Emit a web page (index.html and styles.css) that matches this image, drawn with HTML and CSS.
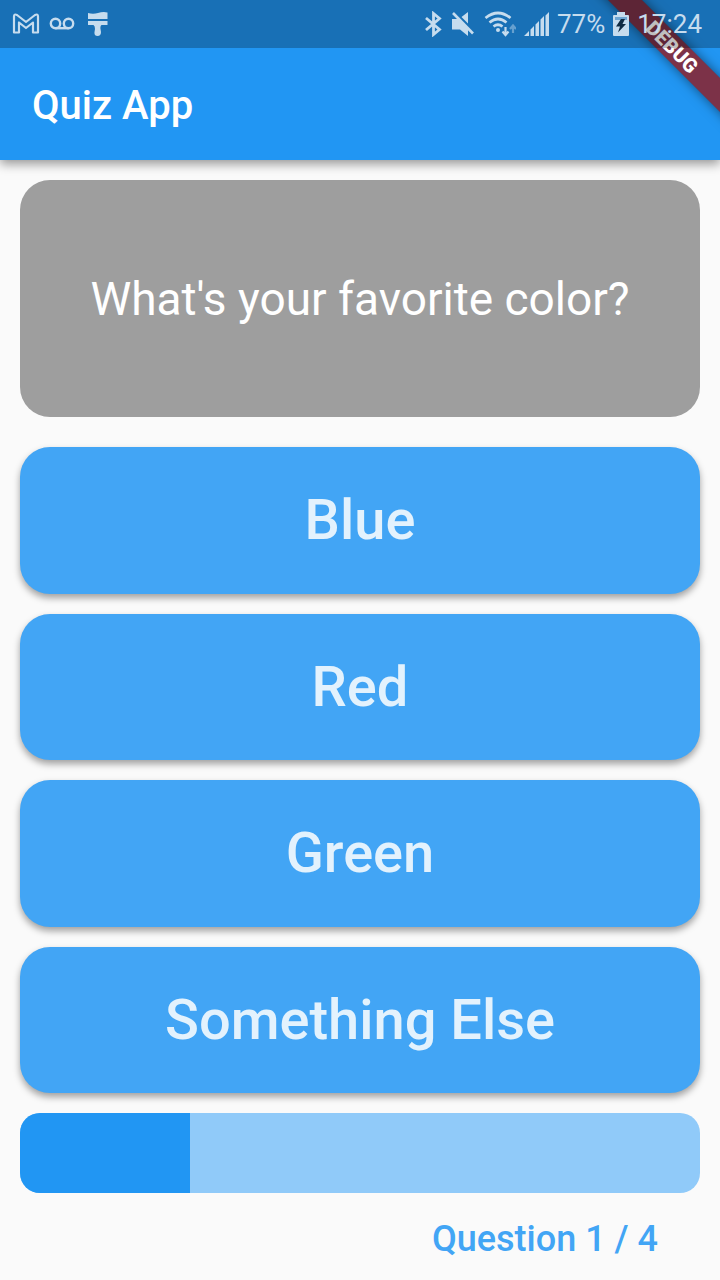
FILE: index.html
```html
<!DOCTYPE html>
<html lang="en">
<head>
<meta charset="utf-8">
<meta name="viewport" content="width=device-width, initial-scale=1">
<title>Quiz App</title>
<link rel="stylesheet" href="styles.css">
</head>
<body>
<div class="app">
  <header class="app-bar">
    <h1 class="app-title">Quiz App</h1>
  </header>
  <div class="corner"><span class="ribbon">DEBUG</span></div>
  <div class="status-bar">
    <div class="status-group">
      <svg class="icon" width="28" height="24" viewBox="0 0 28 24" fill="none" stroke="currentColor" stroke-width="2.200" stroke-linejoin="round"><path d="M2 20.500V4.500Q2 1.500 5 3L14 10L23 3Q26 1.500 26 4.500V20.500H21V10.500L14 16L7 10.500V20.500Z"/></svg>
      <svg class="icon" width="28" height="24" viewBox="0 0 28 24" fill="none" stroke="currentColor" stroke-width="2.400"><circle cx="7.500" cy="11.500" r="4.700"/><circle cx="20.500" cy="11.500" r="4.700"/><path d="M7.500 16.200H20.500"/></svg>
      <svg class="icon" width="28" height="24" viewBox="0 0 28 24" fill="currentColor"><path d="M4 1Q9 2.500 14 1T23.500 0.500V7H4ZM4 9H23.500V13H17.500Q16 14 16.500 17L17 20Q17 24 13.500 24T10.500 20L11 17Q11 14 9.500 13H4Z"/></svg>
    </div>
    <div class="status-group">
      <svg class="icon" width="18" height="26" viewBox="0 0 18 26" fill="none" stroke="currentColor" stroke-width="2.800"><path d="M2 7L15.500 18.500L9.500 23.500V2.500L15.500 7.500L2 19"/></svg>
      <svg class="icon icon-mute" width="24" height="26" viewBox="0 0 24 26"><path fill="currentColor" d="M0 8H6L16 18V25L8 18.500H0ZM9.500 6L16 1V12.500Z"/><path d="M1 2L21 22.500" stroke="currentColor" stroke-width="2.600"/></svg>
      <svg class="icon" width="32" height="26" viewBox="0 0 32 26" fill="none" stroke="currentColor" stroke-width="2.700"><path d="M1.500 7Q14 -3 26.500 7M5.500 11.500Q14 4.500 22.500 11.500M9.500 15.500Q14 12 18.500 15.500"/><circle cx="14" cy="19" r="2" fill="currentColor" stroke="none"/><path stroke-width="2.200" d="M21.500 16V24M18.500 20.500L21.500 24L24.500 20.500"/><path opacity=".45" stroke-width="2.200" d="M29 22V15M26 18L29 14.500L32 18"/></svg>
      <svg class="icon icon-signal" width="25" height="26" viewBox="0 0 25 26" fill="currentColor"><path d="M0 25L5 20V25ZM6.500 18.500L10 15V25H6.500ZM11.500 13.500L15 10V25H11.500ZM16.500 8.500L20 5V25H16.500ZM21.500 4.500L25 1V25H21.500Z"/></svg>
      <span class="status-text">77%</span>
      <svg class="icon" width="16" height="26" viewBox="0 0 16 26"><path fill="currentColor" d="M4 1H12V4H15Q16 4 16 5V24Q16 25 15 25H1Q0 25 0 24V5Q0 4 1 4H4Z"/><path fill="#6da5d2" d="M2 6H14V9H2Z"/><path fill="#102c44" d="M8 8L3 15.500H7L5 21.500L13 13H9.500L12 8Z"/></svg>
      <span class="status-text">17:24</span>
    </div>
  </div>
  <main class="quiz">
    <h2 class="question">What's your favorite color?</h2>
    <div class="answers">
      <button class="answer" type="button">Blue</button>
      <button class="answer" type="button">Red</button>
      <button class="answer" type="button">Green</button>
      <button class="answer" type="button">Something Else</button>
    </div>
    <progress class="progress" aria-labelledby="counter" value="1" max="4"></progress>
    <p class="counter" id="counter">Question 1 / 4</p>
  </main>
</div>
</body>
</html>
```
FILE: styles.css
```css
* {
  box-sizing: border-box;
}

body {
  margin: 0;
  background: #fafafa;
  font-family: Roboto, sans-serif;
}

.app {
  position: relative;
  display: flex;
  flex-direction: column;
  min-height: 100vh;
}

.app-bar {
  padding: 82px 32px 30px;
  background: #2196f3;
  box-shadow: 0 4px 10px rgba(0, 0, 0, 0.4);
}

.app-title {
  margin: 0;
  color: #fff;
  font-size: 40px;
  font-weight: 500;
  line-height: 48px;
}

.corner {
  position: absolute;
  top: 0;
  right: 0;
  width: 160px;
  height: 160px;
  overflow: hidden;
}

.ribbon {
  position: absolute;
  top: 35px;
  right: -72px;
  width: 240px;
  background: rgba(127, 46, 66, 0.97);
  box-shadow: 0 0 12px rgba(0, 0, 0, 0.5);
  color: #fff;
  font-size: 20px;
  font-weight: 900;
  line-height: 24px;
  text-align: center;
  transform: rotate(45deg);
}

.status-bar {
  position: absolute;
  top: 0;
  left: 0;
  right: 0;
  display: flex;
  align-items: center;
  justify-content: space-between;
  height: 48px;
  padding: 0 18px 0 12px;
  background: rgba(0, 0, 0, 0.25);
  color: #c6dcee;
}

.status-group {
  display: flex;
  align-items: center;
  gap: 8px;
}

.icon {
  flex: none;
}

.icon-mute {
  margin-left: 2px;
}

.status-text {
  font-size: 26px;
  line-height: 32px;
}

.quiz {
  flex: 1;
  display: flex;
  flex-direction: column;
  padding: 20px 20px 20px;
}

.question {
  flex: 237 1 0;
  display: flex;
  align-items: center;
  justify-content: center;
  margin: 0 0 30px;
  padding: 0 20px;
  border-radius: 30px;
  background: #9e9e9e;
  color: #fff;
  font-size: 46px;
  font-weight: 400;
  line-height: 54px;
  text-align: center;
}

.answers {
  flex: 646 1 0;
  display: grid;
  grid-auto-rows: 1fr;
  gap: 20px;
}

.answer {
  padding: 16px;
  border: 0;
  border-radius: 30px;
  background: #42a5f5;
  box-shadow: 0 4px 7px rgba(0, 0, 0, 0.36);
  color: #e3f2fd;
  font: inherit;
  font-size: 56px;
  font-weight: 500;
  line-height: 66px;
}

.progress {
  appearance: none;
  display: block;
  width: 100%;
  height: 80px;
  margin-top: 20px;
  border: 0;
  border-radius: 20px;
  background: #90caf9;
  overflow: hidden;
}

.progress::-webkit-progress-bar {
  background: #90caf9;
}

.progress::-webkit-progress-value {
  background: #2196f3;
}

.counter {
  margin: 25px 42px 0;
  color: #42a5f5;
  font-size: 36px;
  font-weight: 500;
  line-height: 42px;
  text-align: right;
}
```
